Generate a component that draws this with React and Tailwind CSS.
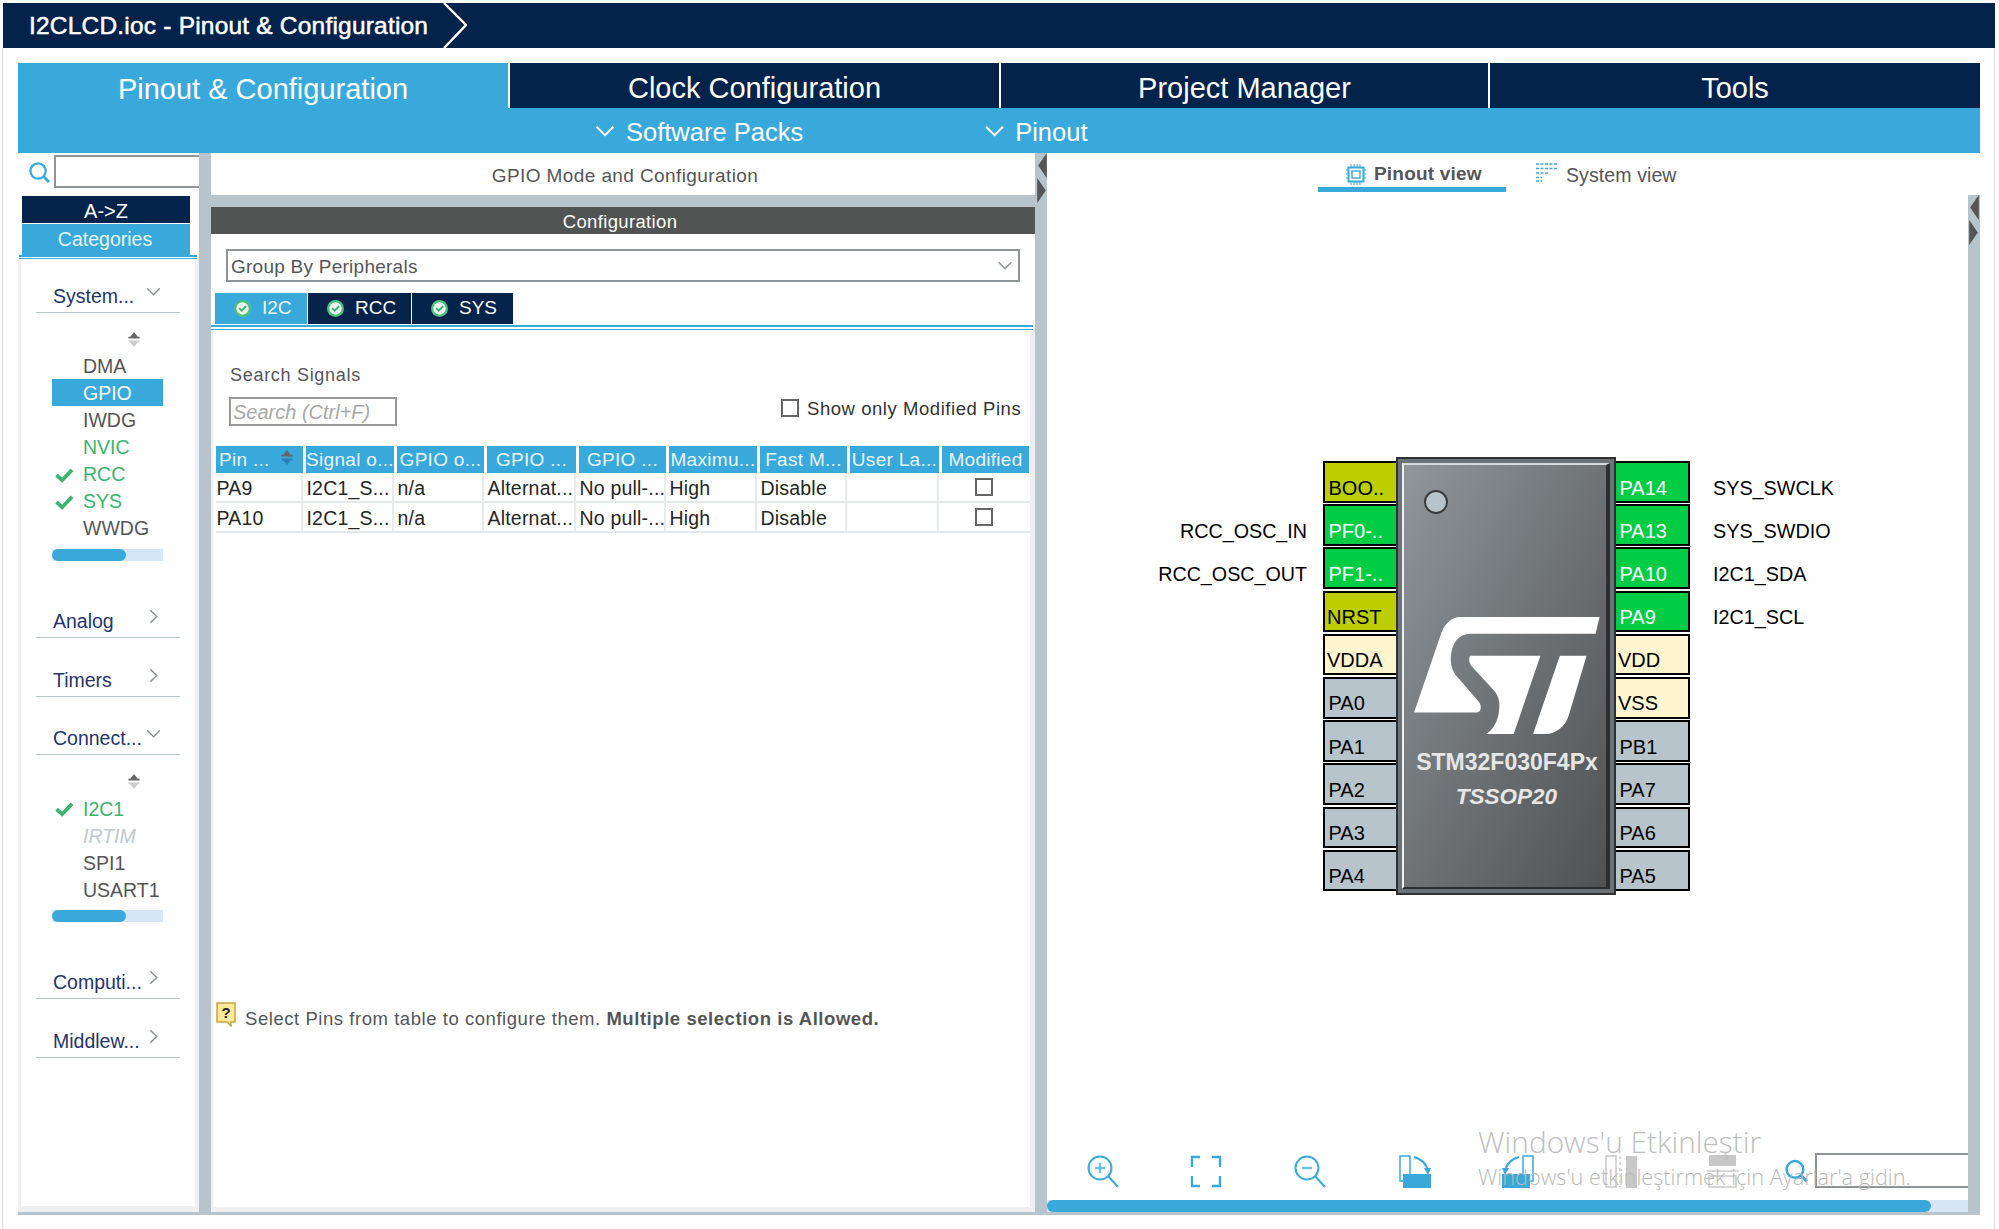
import React from "react";

const Chev = ({ className = "", color = "#8a8f93" }) => (
  <svg viewBox="0 0 16 10" className={className} fill="none"><path d="M1 1.5 L8 8.5 L15 1.5" stroke={color} strokeWidth="1.6" /></svg>
);
const ChevR = ({ className = "" }) => (
  <svg viewBox="0 0 10 16" className={className} fill="none"><path d="M1.5 1 L8.5 8 L1.5 15" stroke="#8a8f93" strokeWidth="1.6" /></svg>
);
const Check = () => (
  <svg viewBox="0 0 20 16" className="w-[19px] h-[15px]" fill="none"><path d="M1.5 7.5 L7.5 13 L18 2" stroke="#3cb371" strokeWidth="4" /></svg>
);
const Badge = () => (
  <svg viewBox="0 0 16 16" className="w-[17px] h-[17px] shrink-0">
    <circle cx="8" cy="8" r="8" fill="#4cc07a" /><circle cx="8" cy="8" r="5.8" fill="#eef6ee" />
    <path d="M4.8 7.6 L7.3 10 L11.4 5.8" stroke="#3cb371" strokeWidth="1.8" fill="none" />
  </svg>
);
const Sort = ({ top = "#666", bottom = "#ccc", className = "" }) => (
  <svg viewBox="0 0 12 16" className={className}>
    <path d="M6 0 L10 5 L12 5 L12 7 L0 7 L0 5 L2 5 Z" fill={top} />
    <path d="M0 9 L12 9 L12 11 L10 11 L6 16 L2 11 L0 11 Z" fill={bottom} />
  </svg>
);
const SearchIco = ({ className = "" }) => (
  <svg viewBox="0 0 22 22" className={className} fill="none" stroke="#39a9dc">
    <circle cx="9.5" cy="9.5" r="8" strokeWidth="2.4" /><path d="M15 15 L21 21" strokeWidth="3" />
  </svg>
);
const Split = ({ className = "" }) => (
  <div className={`flex flex-col shrink-0 ${className}`}>
    <svg viewBox="0 0 11 26" className="w-[11px] h-[25px]"><path d="M11 0 L11 26 L2 13 Z" fill="#555" /></svg>
    <svg viewBox="0 0 11 26" className="w-[11px] h-[25px]"><path d="M1 0 L10 13 L1 26 Z" fill="#555" /></svg>
  </div>
);

const Heading = ({ label, open, mt }) => (
  <div className={`mx-[15px] w-[144px] h-[37px] border-b border-[#b8c4cc] pl-[17px] pt-[5px] flex items-center relative ${mt}`}>
    <span className="text-[19.5px] leading-none text-[#24356b] whitespace-nowrap">{label}</span>
    {open
      ? <Chev className="w-[15px] h-[9px] absolute left-[110px] top-[11px]" />
      : <ChevR className="w-[9px] h-[15px] absolute left-[113px] top-[8px]" />}
  </div>
);
const Row = ({ label, kind, low }) => {
  const text = kind === "sel" ? "text-white" : kind === "ok" || kind === "nvic" ? "text-[#3cb371]" : kind === "off" ? "text-[#c0c8d0] italic" : "text-[#555558]";
  return (
    <div className={`ml-[31px] w-[111px] h-[27px] flex items-center ${low ? "pt-[3px]" : "pt-[2px]"} ${kind === "sel" ? "bg-[#39a9dc]" : ""}`}>
      <div className="w-[31px] pl-[3px] flex shrink-0">{kind === "ok" && <Check />}</div>
      <span className={`text-[19.5px] leading-none whitespace-nowrap ${text}`}>{label}</span>
    </div>
  );
};
const HScroll = ({ mt }) => (
  <div className={`ml-[31px] w-[111px] h-[12px] bg-[#d6e6f4] ${mt}`}><div className="w-[74px] h-full rounded-full bg-[#39a9dc]" /></div>
);

const Sidebar = () => (
  <div className="w-[181px] shrink-0 flex flex-col">
    <div className="flex items-center h-[43px] pb-[7px]">
      <SearchIco className="w-[21px] h-[21px] ml-[11px] mt-[2px]" />
      <div className="ml-[4px] flex-1 h-[33px] border-y-2 border-l-2 border-[#8f9498]" />
    </div>
    <div className="ml-[4px] w-[168px] h-[27px] pt-[2px] bg-[#03234b] text-white text-[20px] flex items-center justify-center">A-&gt;Z</div>
    <div className="ml-[4px] w-[168px] h-[31px] mt-[1px] pr-[2px] bg-[#39a9dc] text-[#e8f6fc] text-[19.5px] flex items-center justify-center">Categories</div>
    <div className="ml-[1px] w-[178px] h-[4px] border-t-2 border-b border-[#39a9dc]" />
    <div className="flex-1 bg-[#eef0f3] pl-[3px] pr-[4px] pb-[6px] flex">
      <div className="w-[174px] bg-white">
        <Heading label="System..." open mt="mt-[17px]" />
        <Sort className="w-[12px] h-[15px] ml-[107px] mt-[19px]" />
        <div className="mt-[5px]">
          <Row low label="DMA" /><Row low label="GPIO" kind="sel" /><Row low label="IWDG" /><Row low label="NVIC" kind="nvic" />
          <Row low label="RCC" kind="ok" /><Row low label="SYS" kind="ok" /><Row low label="WWDG" />
        </div>
        <HScroll mt="mt-[8px]" />
        <Heading label="Analog" mt="mt-[40px]" />
        <Heading label="Timers" mt="mt-[22px]" />
        <Heading label="Connect..." open mt="mt-[21px]" />
        <Sort className="w-[12px] h-[15px] ml-[107px] mt-[19px]" />
        <div className="mt-[6px]">
          <Row label="I2C1" kind="ok" /><Row label="IRTIM" kind="off" /><Row label="SPI1" /><Row label="USART1" />
        </div>
        <HScroll mt="mt-[7px]" />
        <Heading label="Computi..." mt="mt-[40px]" />
        <Heading label="Middlew..." mt="mt-[22px]" />
      </div>
    </div>
  </div>
);

const widths = ["w-[87px]", "w-[88px]", "w-[87px]", "w-[89px]", "w-[87px]", "w-[88px]", "w-[87px]", "w-[89px]", "w-[87px]"];
const heads = ["Pin ...", "Signal o...", "GPIO o...", "GPIO ...", "GPIO ...", "Maximu...", "Fast M...", "User La...", "Modified"];
const Box = ({ className = "" }) => <div className={`w-[18px] h-[18px] border-2 border-[#666] bg-white shrink-0 ${className}`} />;

const BodyRow = ({ cells }) => (
  <div className="flex h-[30px] border-b-2 border-[#e4e8ea] ml-[3px] w-[814px]">
    {cells.map((c, i) => (
      <div key={i} className={`${widths[i]} ${i < 8 ? "mr-[3px] border-r-2 border-[#e8ebed]" : ""} pl-[0.5px] flex items-center text-[19.5px] tracking-[0.2px] text-[#262626] whitespace-nowrap overflow-hidden`}>
        {c === "box" ? <Box className="ml-[32px]" /> : <span className="pt-[3px]">{c}</span>}
      </div>
    ))}
  </div>
);

const Center = () => (
  <div className="w-[824px] shrink-0 flex flex-col">
    <div className="h-[42px] flex items-center justify-center pl-[4px] pt-[4px] text-[19px] tracking-[0.4px] text-[#555558]">GPIO Mode and Configuration</div>
    <div className="h-[12px] bg-[#b8c4cc]" />
    <div className="h-[27px] pt-[3px] bg-[#525453] text-white text-[18.5px] tracking-[0.35px] flex items-center justify-center pr-[6px]">Configuration</div>
    <div className="flex-1 flex flex-col bg-white">
      <div className="mt-[15px] ml-[15px] w-[794px] h-[33px] border-2 border-[#8f9498] flex items-center justify-between pl-[3px] pr-[5px] text-[19px] tracking-[0.25px] text-[#555558]">
        <span className="pt-[3px]">Group By Peripherals</span><Chev className="w-[16px] h-[9px]" />
      </div>
      <div className="mt-[11px] ml-[4px] flex h-[31px] gap-[1px] text-[19px]">
        {[["I2C", "w-[92px] bg-[#39a9dc] text-[#e8f6fc]"], ["RCC", "w-[103px] bg-[#03234b] text-white"], ["SYS", "w-[101px] bg-[#03234b] text-white"]].map(([t, c]) => (
          <div key={t} className={`${c} flex items-center pl-[19px] gap-[11px]`}><Badge />{t}</div>
        ))}
      </div>
      <div className="ml-[0px] w-[822px] h-[5px] border-t-2 border-b border-[#39a9dc] mt-[1px]" />
      <div className="flex-1 flex flex-col border-l-2 border-r-[5px] border-[#eef0f3] border-b-[5px]">
        <div className="ml-[17px] mt-[34px] text-[18px] tracking-[0.7px] leading-[22px] text-[#555558]">Search Signals</div>
        <div className="flex items-start h-[29px] mt-[11px]">
          <div className="ml-[16px] w-[168px] h-[29px] border-2 border-[#999] pl-[2px] flex items-center italic text-[#a8a8a8] text-[20px]">Search (Ctrl+F)</div>
          <div className="ml-[384px] mt-[1px] flex items-center gap-[8px] text-[18.5px] leading-[18px] tracking-[0.55px] text-[#333] whitespace-nowrap"><Box /><span className="pt-[2px]">Show only Modified Pins</span></div>
        </div>
        <div className="mt-[20px] ml-[3px] flex gap-[3px] h-[27px] pt-[0px]">
          {heads.map((h, i) => (
            <div key={i} className={`${widths[i]} bg-[#39a9dc] text-[#e8f6fc] text-[19px] tracking-[0.3px] pt-[1px] flex items-center whitespace-nowrap ${i === 0 ? "pl-[3px] justify-between pr-[10px]" : "justify-center"}`}>
              {h}{i === 0 && <Sort top="#666" bottom="#2f7fb0" className="w-[12px] h-[15px] -mt-[6px]" />}
            </div>
          ))}
        </div>
        <BodyRow cells={["PA9", "I2C1_S...", "n/a", "Alternat...", "No pull-...", "High", "Disable", "", "box"]} />
        <BodyRow cells={["PA10", "I2C1_S...", "n/a", "Alternat...", "No pull-...", "High", "Disable", "", "box"]} />
        <div className="mt-[469px] ml-[3px] flex items-start">
          <svg viewBox="0 0 20 25" className="w-[20px] h-[25px] shrink-0">
            <path d="M1 1 H19 V20 H15 L15 24 L11 20 H1 Z" fill="#fdeb9a" stroke="#c9a24a" strokeWidth="1.5" />
            <text x="10" y="16" textAnchor="middle" fontSize="15" fontWeight="700" fontFamily="Liberation Sans" fill="#222">?</text>
          </svg>
          <div className="ml-[9px] text-[18.5px] tracking-[0.55px] leading-[22px] mt-[6px] text-[#555558] whitespace-nowrap">Select Pins from table to configure them. <b>Multiple selection is Allowed.</b></div>
        </div>
      </div>
    </div>
  </div>
);

const pinStyles = {
  y: "bg-[#bccd00] text-black",
  g: "bg-[#00cc44] text-white",
  c: "bg-[#fff6cf] text-black",
  s: "bg-[#b8c4cc] text-black",
};
const leftPins = [["BOO..", "y"], ["PF0-..", "g"], ["PF1-..", "g"], ["NRST", "y", 1], ["VDDA", "c", 1], ["PA0", "s"], ["PA1", "s"], ["PA2", "s"], ["PA3", "s"], ["PA4", "s"]];
const rightPins = [["PA14", "g"], ["PA13", "g"], ["PA10", "g"], ["PA9", "g"], ["VDD", "c", 1], ["VSS", "c", 1], ["PB1", "s"], ["PA7", "s"], ["PA6", "s"], ["PA5", "s"]];

const Pin = ({ t, k, tight, side }) => (
  <div className={`h-[41.6px] mb-[1.6px] border-y-2 ${side === "l" ? "border-l-2" : "border-r-2"} border-black pt-[13.5px] text-[20px] leading-[22px] ${pinStyles[k]} ${tight ? "pl-[2px]" : "pl-[3.5px]"}`}>{t}</div>
);

const Chip = () => (
  <div className="w-[220px] h-[438px] shrink-0 border-2 border-[#2f3133] bg-[#6d7276] p-[4px]">
    <div className="w-full h-full border-l-2 border-t-2 border-l-[#f0f0f0] border-t-[#d8dcdf] border-r-4 border-b-2 border-r-[#2c2e30] border-b-[#2c2e30] bg-gradient-to-br from-[#8f969c] to-[#505252] flex flex-col items-center">
      <div className="self-start ml-[20px] mt-[25px] w-[24px] h-[24px] rounded-full bg-[#b8c4cc] border-2 border-[#3a3c3e]" />
      <svg viewBox="342 532 556 350" className="w-[186px] h-[117px] mt-[103px] ml-[4px]" fill="#fff">
        <path d="M897,532 L885,582 L510,582 C475,582 455,610 452,650 C450,680 460,700 475,715 L535,785 C545,797 545,818 525,818 L342,818 L420,590 C432,550 455,532 480,532 Z" />
        <path d="M510,648 L720,648 L640,882 L558,882 C585,865 598,830 597,795 C597,775 590,760 575,745 L515,680 C505,668 505,655 510,648 Z" />
        <path d="M778,648 L858,648 L805,825 C795,860 765,882 735,882 L698,882 Z" />
      </svg>
      <div className="mt-[15px] ml-[4px] text-[23px] leading-[26px] font-bold text-[#e6e6e6] whitespace-nowrap">STM32F030F4Px</div>
      <div className="mt-[9px] ml-[3px] text-[22.5px] leading-[26px] font-bold italic text-[#e6e6e6]">TSSOP20</div>
    </div>
  </div>
);

const ZoomIco = ({ minus }) => (
  <svg viewBox="0 0 32 33" className="w-[32px] h-[33px]" fill="none" stroke="#39a9dc">
    <circle cx="13" cy="13" r="11.5" strokeWidth="2" />
    <path d="M21 21 L31 32" strokeWidth="2" />
    <path d={minus ? "M8 13 H18" : "M8 13 H18 M13 8 V18"} strokeWidth="2.4" stroke="#6cc0e6" />
  </svg>
);
const FrameIco = () => (
  <svg viewBox="0 0 32 33" className="w-[32px] h-[33px]" fill="none" stroke="#39a9dc" strokeWidth="2.4">
    <path d="M10 2 H2 V12 M22 2 H30 V12 M2 21 V31 H10 M30 21 V31 H22" />
  </svg>
);
const RotIco = ({ flip }) => (
  <svg viewBox="0 0 32 33" className={`w-[32px] h-[33px] ${flip ? "-scale-x-100" : ""}`} fill="none">
    <path d="M1 1 H11 V26 H1 Z" stroke="#39a9dc" strokeWidth="1.5" />
    <rect x="4" y="19" width="28" height="14" fill="#39a9dc" />
    <path d="M15 2 C22 4 28 9 29 17" stroke="#39a9dc" strokeWidth="2" />
    <path d="M25 13 L29 20 L32 13 Z" fill="#39a9dc" />
  </svg>
);
const VSplitIco = () => (
  <svg viewBox="0 0 32 33" className="w-[32px] h-[33px]" fill="none">
    <rect x="1" y="1" width="10" height="31" stroke="#c8c8c8" strokeWidth="1.5" />
    <rect x="21" y="1" width="11" height="32" fill="#c8c8c8" />
    <path d="M15 1 V32" stroke="#d8d8d8" strokeWidth="2" strokeDasharray="3 3" />
  </svg>
);
const HSplitIco = () => (
  <svg viewBox="0 0 32 33" className="w-[32px] h-[33px]" fill="none">
    <rect x="2" y="0" width="27" height="11" fill="#c8c8c8" />
    <rect x="2" y="21" width="27" height="11" stroke="#c8c8c8" strokeWidth="1.5" />
    <path d="M0 16 H32" stroke="#d8d8d8" strokeWidth="2" />
  </svg>
);

const RightPanel = () => (
  <div className="w-[933px] shrink-0 flex flex-col bg-white">
    <div className="h-[42px] flex items-start">
      <div className="ml-[271px] w-[188px] h-[39px] border-b-[5px] border-[#39a9dc] flex items-center pl-[28px] pt-[9px] gap-[8px] text-[19px] tracking-[0.2px] font-bold text-[#555558] whitespace-nowrap">
        <svg viewBox="0 0 20 21" className="w-[20px] h-[21px] shrink-0" fill="none" stroke="#39a9dc">
          <rect x="2.5" y="3.5" width="15" height="14" strokeWidth="2" />
          <rect x="6" y="7" width="8" height="7" strokeWidth="1.4" />
          <path d="M5 0 V3 M8 0 V3 M11 0 V3 M14 0 V3 M5 18 V21 M8 18 V21 M11 18 V21 M14 18 V21 M0 6 H2 M0 10 H2 M0 14 H2 M18 6 H20 M18 10 H20 M18 14 H20" strokeWidth="1" />
        </svg>
        Pinout view
      </div>
      <div className="ml-[30px] h-[39px] pt-[6px] flex items-center gap-[9px] text-[19.5px] tracking-[0.1px] text-[#555558] whitespace-nowrap">
        <svg viewBox="0 0 21 19" className="w-[21px] h-[19px] shrink-0 -mt-[6px]" fill="none" stroke="#39a9dc" strokeWidth="1.4" strokeDasharray="3 1.5">
          <path d="M0 1 H21 M0 5.5 H21 M0 10 H12 M0 14.5 H6 M0 18 H6" />
        </svg>
        System view
      </div>
    </div>
    <div className="flex-1 flex">
      <div className="w-[921px] flex flex-col">
        <div className="mt-[262px] flex items-start">
          <div className="w-[260px] mt-[4px] shrink-0 text-[19.7px] text-black text-right">
            {["", "RCC_OSC_IN", "RCC_OSC_OUT", "", "", "", "", "", "", ""].map((t, i) => (
              <div key={i} className="h-[43.2px] pt-[15.5px] leading-[22px]">{t}</div>
            ))}
          </div>
          <div className="w-[73px] ml-[16px] mt-[4px] shrink-0">
            {leftPins.map(([t, k, g]) => <Pin key={t} t={t} k={k} tight={g} side="l" />)}
          </div>
          <Chip />
          <div className="w-[74px] mt-[4px] shrink-0">
            {rightPins.map(([t, k, g]) => <Pin key={t} t={t} k={k} tight={g} side="r" />)}
          </div>
          <div className="ml-[23px] mt-[4px] text-[19.8px] text-black whitespace-nowrap">
            {["SYS_SWCLK", "SYS_SWDIO", "I2C1_SDA", "I2C1_SCL"].map((t) => (
              <div key={t} className="h-[43.2px] pt-[15.5px] leading-[22px]">{t}</div>
            ))}
          </div>
        </div>
        <div className="flex-1" />
        <div className="h-[35px] flex items-center">
          <div className="ml-[40px] mt-[2px]"><ZoomIco /></div>
          <div className="ml-[71px] mt-[2px]"><FrameIco /></div>
          <div className="ml-[72px] mt-[2px]"><ZoomIco minus /></div>
          <div className="ml-[73px] mt-[2px]"><RotIco /></div>
          <div className="ml-[71px] mt-[2px]"><RotIco flip /></div>
          <div className="ml-[71px] mt-[2px]"><VSplitIco /></div>
          <div className="ml-[70px] mt-[2px]"><HSplitIco /></div>
          <SearchIco className="ml-[46px] w-[23px] h-[26px]" />
          <div className="ml-[7px] flex-1 h-[35px] border-y-2 border-l-2 border-[#8f9498]" />
        </div>
        <div className="mt-[12px] h-[12px] bg-[#d6e6f4]"><div className="w-[884px] h-full rounded-full bg-[#39a9dc]" /></div>
      </div>
      <div className="w-[12px] bg-[#b8c4cc]"><Split /></div>
    </div>
  </div>
);

export default function App() {
  return (
    <div className="relative w-[1999px] h-[1229px] bg-white overflow-hidden font-['Liberation_Sans',Arial,sans-serif]">
      <div className="pt-[3px] pl-[3px]">
        <div className="w-[1992px] h-[45px] bg-[#03234b] flex items-center">
          <div className="w-[438px] pl-[26px] pt-[2px] text-[24.5px] tracking-[0.2px] text-white [-webkit-text-stroke:0.5px_white] whitespace-nowrap">I2CLCD.ioc - Pinout &amp; Configuration</div>
          <svg viewBox="0 0 26 45" className="w-[26px] h-[45px]" fill="none"><path d="M3 0 L25 22 L3 45" stroke="#fff" strokeWidth="2.4" /></svg>
        </div>
      </div>
      <div className="ml-[2px] w-[1993px] h-[1181px] border-x border-[#dcdcdc] pl-[15px] pt-[15px]">
        <div className="w-[1962px]">
          <div className="flex h-[45px] text-[29px] gap-[2px] bg-white">
            <div className="w-[490px] bg-[#39a9dc] text-white flex items-center justify-center pt-[8px]">Pinout &amp; Configuration</div>
            <div className="w-[489px] bg-[#03234b] text-white flex items-center justify-center pt-[6px]">Clock Configuration</div>
            <div className="w-[487px] bg-[#03234b] text-white flex items-center justify-center pt-[6px]">Project Manager</div>
            <div className="flex-1 bg-[#03234b] text-white flex items-center justify-center pt-[6px]">Tools</div>
          </div>
          <div className="h-[45px] bg-[#39a9dc] text-white text-[25.5px] flex items-center">
            <Chev color="#ffffff" className="ml-[577px] w-[20px] h-[12px]" />
            <span className="ml-[11px] pt-[3px]">Software Packs</span>
            <Chev color="#ffffff" className="ml-[181px] w-[21px] h-[12px]" />
            <span className="ml-[10px] pt-[3px]">Pinout</span>
          </div>
          <div className="flex h-[1059px]">
            <Sidebar />
            <div className="w-[12px] bg-[#b8c4cc] shrink-0" />
            <Center />
            <div className="w-[12px] bg-[#b8c4cc] shrink-0"><Split className="ml-[1px]" /></div>
            <RightPanel />
          </div>
          <div className="h-[3px] bg-[#b8c4cc]" />
        </div>
      </div>
      <div className="absolute left-[1478px] top-[1122px] text-[29.8px] leading-[40px] font-['Open_Sans',sans-serif] font-light text-[#bebebe] whitespace-nowrap">Windows'u Etkinleştir</div>
      <div className="absolute left-[1478px] top-[1163px] text-[21.7px] leading-[28px] font-['Open_Sans',sans-serif] font-light text-[#b8b8b8] whitespace-nowrap">Windows'u etkinleştirmek için Ayarlar'a gidin.</div>
    </div>
  );
}
